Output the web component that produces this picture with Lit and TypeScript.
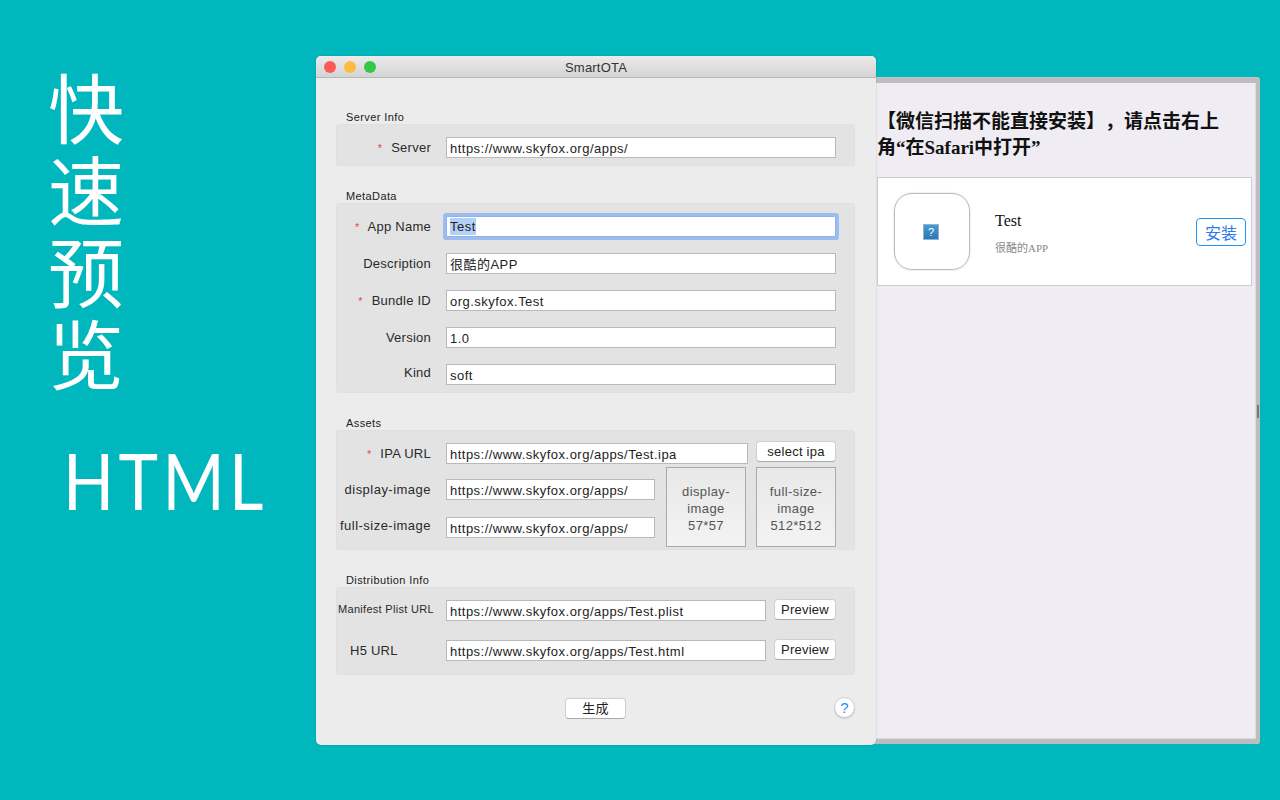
import { LitElement, html, css } from "lit";
import { customElement } from "lit/decorators.js";

@customElement("app-root")
export class AppRoot extends LitElement {
  static styles = css`
    :host { display: block; width: 1280px; height: 800px; position: relative; overflow: hidden; background: #00b7bd;
      font-family: "Liberation Sans", "Noto Sans CJK SC", sans-serif; color: #222; }
    .promo { display: flex; flex-direction: column; align-items: flex-start; padding: 64px 0 0 48px; color: #fff; }
    .cjk { font: 400 76px/82px "Noto Sans CJK SC", sans-serif; width: 76px; }
    .latin { font: 400 77px/90px Lato, sans-serif; letter-spacing: 5px; margin: 43px 0 0 15px; transform: scaleX(.87); transform-origin: left; }

    .back { position: absolute; left: 860px; top: 78px; width: 400px; height: 666px; box-sizing: border-box;
      background: #efedf3; border: solid #bdbdbd; border-width: 5px 4px 5px 0; border-radius: 3px; box-shadow: inset -1px -1px 0 #ddd, 0 -1px 0 #c4c4c4; padding: 26px 4px 0 17px; }
    .back h2 { margin: 0; font: 700 19px/26px "Liberation Serif", "Noto Sans CJK SC", serif; color: #111; width: 352px; text-spacing-trim: space-all; font-kerning: none; }
    .card { margin-top: 16px; height: 109px; box-sizing: border-box; background: #fff; border: 1px solid #ccc; display: flex; align-items: center; padding: 0 5px 0 16px; }
    .icon { width: 76px; height: 77px; box-sizing: border-box; border: 1px solid #bbb; border-radius: 18px; box-shadow: 0 0 2px #ccc; display: flex; align-items: center; justify-content: center; padding-right: 2px; }
    .broken { width: 16px; height: 16px; box-sizing: border-box; border: 1px solid #8fb4d4; background: linear-gradient(#4a9ad0, #2a78b4); color: #fff; font: 11px/14px "Liberation Sans", sans-serif; text-align: center; }
    .info { margin-left: 25px; flex: 1; font-family: "Liberation Serif", "Noto Sans CJK SC", serif; padding-top: 3px; }
    .name { font-size: 16px; line-height: 20px; color: #111; }
    .sub { font-size: 11px; line-height: 14px; color: #888; margin-top: 10px; }
    .install { width: 50px; height: 28px; box-sizing: border-box; border: 1px solid #1e9bf0; border-radius: 4px; color: #2a7bf0; background: #fff; font: 16px/29px "Liberation Serif", "Noto Sans CJK SC", serif; text-align: center; }

    .win { position: absolute; left: 316px; top: 56px; width: 560px; height: 689px; background: #ececec; border-radius: 5px; box-shadow: 0 0 2px rgba(0,0,0,.2); overflow: hidden; display: flex; flex-direction: column; }
    .titlebar { height: 22px; flex: none; box-sizing: border-box; background: linear-gradient(#ebebeb, #d4d4d4); border-bottom: 1px solid #b8b8b8; display: flex; align-items: center; position: relative; padding-left: 8px; gap: 8px; }
    .light { width: 12px; height: 12px; border-radius: 50%; }
    .title { position: absolute; inset: 1px 0 0 0; text-align: center; font-size: 13px; line-height: 22px; color: #333; letter-spacing: .2px; }
    .content { padding: 33px 21px 0 20px; display: flex; flex-direction: column; flex: 1; }
    .legend { font-size: 11px; line-height: 13px; margin-left: 10px; color: #222; height: 13px; letter-spacing: .4px; }
    .box { background: #e3e3e3; border: 1px solid #e0e0e0; border-radius: 3px; box-sizing: border-box; width: 519px; }
    .s1 { height: 42px; margin-bottom: 24px; padding-top: 12px; }
    .s2 { height: 190px; margin-bottom: 24px; padding-top: 12px; display: flex; flex-direction: column; gap: 16px; }
    .s3 { height: 120px; margin-bottom: 24px; position: relative; }
    .s4 { height: 88px; padding-top: 12px; display: flex; flex-direction: column; gap: 19px; }
    .row { display: flex; align-items: center; height: 21px; }
    .lab { width: 94px; text-align: right; font-size: 13px; line-height: 16px; margin-right: 15px; flex: none; color: #2a2a2a; letter-spacing: .25px; white-space: nowrap; }
    .kind { position: relative; top: -2px; }
    .up { position: relative; top: -2px; }
    .req { color: #e44; margin-right: 5px; font-size: 11px; }
    .field { box-sizing: border-box; height: 21px; background: #fff; border: 1px solid #b9b9b9; font-size: 13px; line-height: 21px; padding-left: 3px; letter-spacing: .48px; color: #222; white-space: nowrap; overflow: hidden; }
    .w390 { width: 390px; }
    .focus { border: 1px solid #8fb2ea; box-shadow: 0 0 0 3px #9dbdf0; border-radius: 1px; }
    .sel { background: #b3d1f7; display: inline-block; line-height: 17px; vertical-align: top; margin-top: 1px; }
    .btn { box-sizing: border-box; background: #fff; border-radius: 4px; border: 1px solid #cfcfcf; border-bottom-color: #aaa; font-size: 13px; line-height: 19px; height: 21px; text-align: center; color: #222; letter-spacing: .25px; flex: none; }
    .assets { display: grid; grid-template-columns: 109px 209px 11px 80px 10px 80px; grid-template-rows: 21px 15px 22px 16px 21px; padding-top: 12px; position: relative; }
    .assets .lab { align-self: center; }
    .assets .wide { letter-spacing: .48px; }
    .well { box-sizing: border-box; height: 80px; width: 80px; padding-top: 2px; border: 1px solid #aaa; background: linear-gradient(#e8e8e8, #f3f3f3); font-size: 13px; line-height: 17px; color: #555; text-align: center; display: flex; align-items: center; justify-content: center; letter-spacing: .4px; }
    .w1 { grid-column: 4; grid-row: 2 / 6; margin-top: 3px; }
    .w2 { grid-column: 6; grid-row: 2 / 6; margin-top: 3px; }
    .s4 .lab { text-align: left; box-sizing: border-box; width: 94px; }
    .small { font-size: 11px; padding-left: 1px; letter-spacing: .3px; position: relative; top: -2px; }
    .h5 { padding-left: 13px; }
    .url { width: 320px; }
    .prev { width: 62px; margin: -2px 0 0 8px; }
    .foot { display: flex; align-items: center; position: relative; height: 22px; margin-top: 22px; }
    .gen { width: 61px; margin-left: 229px; }
    .help { position: absolute; left: 498px; top: 0; width: 21px; height: 21px; border-radius: 50%; background: #fff; border: 1px solid #cfcfcf; box-sizing: border-box; color: #2a8ff0; font-size: 15px; line-height: 19px; text-align: center; box-shadow: 0 1px 1px rgba(0,0,0,.15); }
    .grip { position: absolute; left: 1257px; top: 405px; width: 2px; height: 13px; background: #777; }
  `;

  render() {
    const f = "https://www.skyfox.org/apps/";
    const row = (label: string, val: string, req = false, extra = "", labCls = "") => html`
      <div class="row"><div class="lab ${labCls}">${req ? html`<span class="req">*</span>` : ""} ${label}</div>
      <div class="field w390 ${extra}">${extra ? html`<span class="sel">${val}</span>` : val}</div></div>`;
    return html`
      <div class="promo">
        <div class="cjk">快速预览</div>
        <div class="latin">HTML</div>
      </div>
      <div class="back">
        <h2>【微信扫描不能直接安装】，请点击右上角“在Safari中打开”</h2>
        <div class="card">
          <div class="icon"><div class="broken">?</div></div>
          <div class="info"><div class="name">Test</div><div class="sub">很酷的APP</div></div>
          <div class="install">安装</div>
        </div>
      </div>
      <div class="grip"></div>
      <div class="win">
        <div class="titlebar">
          <div class="light" style="background:#fc5b57"></div>
          <div class="light" style="background:#fdbc40"></div>
          <div class="light" style="background:#34c84a"></div>
          <div class="title">SmartOTA</div>
        </div>
        <div class="content">
          <div class="legend">Server Info</div>
          <div class="box s1">${row("Server", f, true)}</div>
          <div class="legend">MetaData</div>
          <div class="box s2">
            ${row("App Name", "Test", true, "focus")}
            ${row("Description", "很酷的APP")}
            ${row("Bundle ID", "org.skyfox.Test", true)}
            ${row("Version", "1.0")}
            ${row("Kind", "soft", false, "", "kind")}
          </div>
          <div class="legend">Assets</div>
          <div class="box s3 assets">
            <div class="lab" style="grid-column:1;grid-row:1"><span class="req">*</span> IPA URL</div>
            <div class="field" style="grid-column:2 / 5;grid-row:1;width:302px">${f}Test.ipa</div>
            <div class="btn" style="grid-column:6;grid-row:1;margin-top:-2px">select ipa</div>
            <div class="lab wide" style="grid-column:1;grid-row:3">display-image</div>
            <div class="field" style="grid-column:2;grid-row:3">${f}</div>
            <div class="well w1">display-<br />image<br />57*57</div>
            <div class="well w2">full-size-<br />image<br />512*512</div>
            <div class="lab wide up" style="grid-column:1;grid-row:5">full-size-image</div>
            <div class="field" style="grid-column:2;grid-row:5">${f}</div>
          </div>
          <div class="legend">Distribution Info</div>
          <div class="box s4">
            <div class="row"><div class="lab small">Manifest Plist URL</div>
              <div class="field url">${f}Test.plist</div>
              <div class="btn prev">Preview</div></div>
            <div class="row"><div class="lab h5">H5 URL</div>
              <div class="field url">${f}Test.html</div>
              <div class="btn prev">Preview</div></div>
          </div>
          <div class="foot">
            <div class="btn gen">生成</div>
            <div class="help">?</div>
          </div>
        </div>
      </div>
    `;
  }
}
